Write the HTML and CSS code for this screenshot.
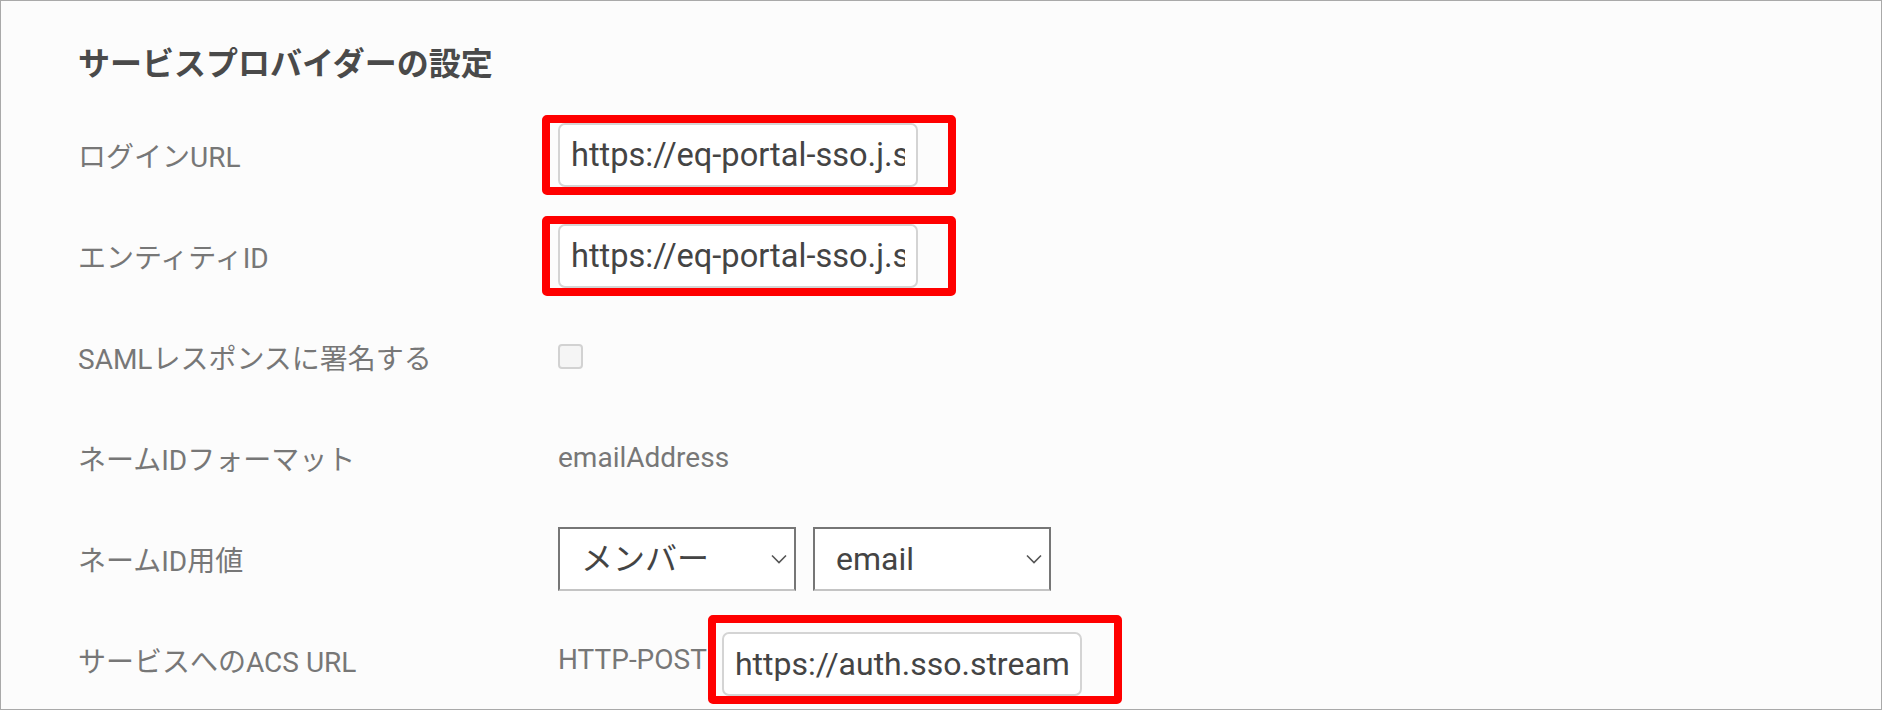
FILE: index.html
```html
<!DOCTYPE html>
<html lang="ja">
<head>
    <meta charset="UTF-8">
    <meta name="viewport" content="width=device-width, initial-scale=1.0">
    <title>サービスプロバイダーの設定</title>
    <link rel="stylesheet" href="styles.css">
</head>
<body>
    <div class="page">
        <h2 class="settings-title">サービスプロバイダーの設定</h2>

        <div class="field">
            <label class="field-label" for="loginUrl">ログインURL</label>
            <div class="field-value">
                <span class="callout">
                    <input class="text-input text-input-long" id="loginUrl" type="text" value="https://eq-portal-sso.j.stream.co.jp/login" readonly>
                </span>
            </div>
        </div>

        <div class="field">
            <label class="field-label" for="entityId">エンティティID</label>
            <div class="field-value">
                <span class="callout">
                    <input class="text-input text-input-long" id="entityId" type="text" value="https://eq-portal-sso.j.stream.co.jp/saml" readonly>
                </span>
            </div>
        </div>

        <div class="field">
            <label class="field-label" for="signResponse">SAMLレスポンスに署名する</label>
            <div class="field-value">
                <input class="checkbox" id="signResponse" type="checkbox">
            </div>
        </div>

        <div class="field">
            <span class="field-label">ネームIDフォーマット</span>
            <div class="field-value">
                <span class="field-text">emailAddress</span>
            </div>
        </div>

        <div class="field">
            <label class="field-label" for="nameIdSource">ネームID用値</label>
            <div class="field-value select-group">
                <span class="select-wrap">
                    <select class="select" id="nameIdSource">
                        <option>メンバー</option>
                    </select>
                    <svg class="select-arrow" width="16" height="10" viewBox="0 0 16 10"><path d="M1 1.5l7 7 7-7" fill="none" stroke="#555" stroke-width="1.6"/></svg>
                </span>
                <span class="select-wrap">
                    <select class="select" id="nameIdAttr">
                        <option>email</option>
                    </select>
                    <svg class="select-arrow" width="16" height="10" viewBox="0 0 16 10"><path d="M1 1.5l7 7 7-7" fill="none" stroke="#555" stroke-width="1.6"/></svg>
                </span>
            </div>
        </div>

        <div class="field">
            <label class="field-label" for="acsUrl">サービスへのACS URL</label>
            <div class="field-value">
                <span class="field-text">HTTP-POST</span>
                <span class="callout callout-acs">
                    <input class="text-input" id="acsUrl" type="text" value="https://auth.sso.stream" readonly>
                </span>
            </div>
        </div>
    </div>
</body>
</html>
```

FILE: styles.css
```css
* {
    box-sizing: border-box;
}

html, body {
    margin: 0;
    padding: 0;
}

body {
    font-family: Roboto, "Noto Sans CJK JP", sans-serif;
    background-color: #fff;
}

.page {
    height: 710px;
    border: 1px solid #a9a9a9;
    background-color: #fcfcfc;
    padding: 43px 77px 0;
}

.settings-title {
    margin: 0 0 20px;
    font-size: 32px;
    line-height: 40px;
    font-weight: 700;
    color: #4a4a4a;
}

.field {
    display: flex;
    align-items: center;
    height: 101px;
}

.field-label {
    flex: none;
    width: 480px;
    font-size: 28px;
    color: #777;
}

.field-value {
    display: flex;
    align-items: center;
}

.field-text {
    font-size: 28px;
    color: #777;
}

/* red highlight drawn round a field */
.callout {
    display: flex;
    margin-left: -16px;
    padding: 0 30px 0 8px;
    border: 8px solid #ff0000;
    border-radius: 5px;
}

.callout-acs {
    margin-left: 1px;
    padding: 9px 32px 0 6px;
}

.text-input {
    width: 360px;
    height: 64px;
    padding: 0 4px 0 11px;
    border: 2px solid #d4d4d4;
    border-radius: 7px;
    background-color: #fff;
    font-family: inherit;
    font-size: 32px;
    color: #444;
    outline: none;
}

/* long urls get cut off partway through the next letter */
.text-input-long {
    padding-right: 11px;
    font-size: 32.6px;
}

.checkbox {
    appearance: none;
    width: 25px;
    height: 25px;
    margin: 0;
    border: 2px solid #d2d2d2;
    border-radius: 4px;
    background-color: #f5f5f5;
}

.select-group {
    gap: 17px;
}

.select-wrap {
    position: relative;
    display: inline-block;
}

.select {
    appearance: none;
    width: 238px;
    height: 64px;
    margin: 0;
    padding: 0 40px 0 21px;
    border: 2px solid #767676;
    border-bottom-color: #c4c4c4;
    border-radius: 0;
    background-color: #fff;
    font-family: inherit;
    font-size: 32px;
    color: #444;
}

.select-arrow {
    position: absolute;
    right: 9px;
    top: 27px;
    pointer-events: none;
}
```
